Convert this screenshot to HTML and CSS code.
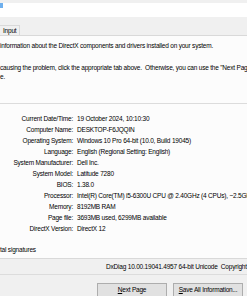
FILE: index.html
```html
<!DOCTYPE html>
<html>
    <head>
        <title>DirectX Diagnostic Tool</title>
        <meta name="viewport" content="width=device-width, initial-scale=1.0">
        <link rel="stylesheet" href="styles.css">
    </head>
<body>
    <div class='titlebar'>
        <span class='app-icon'></span>
    </div>

    <div class='tab-strip'>
        <div class='tab'>Input</div>
    </div>

    <div class='tab-page'>
        <p class='intro'>information about the DirectX components and drivers installed on your system.</p>
        <p class='intro intro-second'>causing the problem, click the appropriate tab above.&nbsp; Otherwise, you can use the "Next Page" button below to visit each page in sequence.<br>e.</p>

        <div class='group'>
            <div class='info-grid'>
                <div class='info-label'>Current Date/Time:</div><div class='info-value'>19 October 2024, 10:10:30</div>
                <div class='info-label'>Computer Name:</div><div class='info-value'>DESKTOP-F6JQQIN</div>
                <div class='info-label'>Operating System:</div><div class='info-value'>Windows 10 Pro 64-bit (10.0, Build 19045)</div>
                <div class='info-label'>Language:</div><div class='info-value'>English (Regional Setting: English)</div>
                <div class='info-label'>System Manufacturer:</div><div class='info-value'>Dell Inc.</div>
                <div class='info-label'>System Model:</div><div class='info-value'>Latitude 7280</div>
                <div class='info-label'>BIOS:</div><div class='info-value'>1.38.0</div>
                <div class='info-label'>Processor:</div><div class='info-value'>Intel(R) Core(TM) i5-6300U CPU @ 2.40GHz (4 CPUs), ~2.5GHz</div>
                <div class='info-label'>Memory:</div><div class='info-value'>8192MB RAM</div>
                <div class='info-label'>Page file:</div><div class='info-value'>3693MB used, 6299MB available</div>
                <div class='info-label'>DirectX Version:</div><div class='info-value'>DirectX 12</div>
            </div>
        </div>

        <div class='whql'>tal signatures</div>
    </div>

    <div class='version'>DxDiag 10.00.19041.4957 64-bit Unicode&nbsp; Copyright © Microsoft. All rights reserved.</div>

    <div class='button-row'>
        <button class='button'><u>N</u>ext Page</button>
        <button class='button'><u>S</u>ave All Information...</button>
    </div>
</body>
</html>
```

FILE: styles.css
```css
html, body {
    margin: 0;
    padding: 0;
}
body {
    width: 247px;
    height: 296px;
    overflow: hidden;
    background: #f0f0f0;
    color: #000;
    font-family: 'Liberation Sans', Arial, sans-serif;
    font-size: 6.5px;
    letter-spacing: -0.2px;
}

.titlebar {
    height: 14px;
    background: #ffffff;
}
.app-icon {
    display: block;
    width: 3px;
    height: 5px;
    margin-top: 3px;
    background: #6fb0ee;
}

.tab-strip {
    height: 18px;
    display: flex;
    align-items: flex-end;
}
.tab {
    width: 20px;
    height: 10px;
    line-height: 10px;
    padding-left: 3px;
    box-sizing: border-box;
    border: 1px solid #d9d9d9;
    border-left: none;
    border-bottom: none;
    background: #f0f0f0;
}

.tab-page {
    height: 224px;
    box-sizing: border-box;
    border-top: 1px solid #d9d9d9;
    border-bottom: 1px solid #d9d9d9;
    background: #fcfcfc;
    white-space: nowrap;
    overflow: hidden;
}
.intro {
    margin: 5px 0 0 0;
    line-height: 9px;
}
.intro-second {
    margin-top: 13px;
}

.group {
    margin-top: 22px;
    border-top: 1px solid #dcdcdc;
    padding-top: 9px;
}
.info-grid {
    display: grid;
    grid-template-columns: 73px auto;
    grid-auto-rows: 11px;
    line-height: 11px;
}
.info-label {
    text-align: right;
}
.info-value {
    padding-left: 4px;
}

.whql {
    margin-top: 11px;
    line-height: 9px;
}

.version {
    height: 15px;
    line-height: 15px;
    padding-left: 106px;
    white-space: nowrap;
    overflow: hidden;
    border-bottom: 1px solid #dcdcdc;
}

.button-row {
    display: flex;
    justify-content: flex-end;
    gap: 6px;
    padding: 8px 4px 0 0;
}
.button {
    width: 70px;
    height: 14px;
    margin: 0;
    padding: 0;
    border: 1px solid #adadad;
    background: #e1e1e1;
    color: #000;
    font-family: inherit;
    font-size: 6.5px;
    letter-spacing: -0.2px;
    line-height: 12px;
}
```
